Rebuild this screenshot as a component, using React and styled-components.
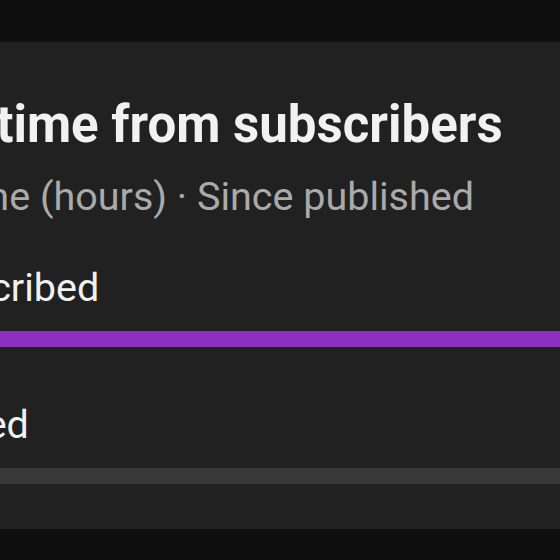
import React from "react";
import styled, { createGlobalStyle } from "styled-components";

const Global = createGlobalStyle`
  html, body {
    margin: 0;
    padding: 0;
    background: #0f0f0f;
    overflow: hidden;
  }
  body {
    font-family: Roboto, "Noto Sans", "Liberation Sans", sans-serif;
  }
`;

const Page = styled.div`
  width: 560px;
  height: 560px;
  padding-top: 42px;
  box-sizing: border-box;
  overflow: hidden;
`;

const Card = styled.section`
  background: #212121;
  margin-left: -168px;
  width: 900px;
  padding: 53px 0 45px 0;
  box-sizing: border-box;
`;

const Header = styled.header`
  padding-left: 8px;
`;

const Title = styled.h2`
  margin: 0;
  font-size: 51px;
  line-height: 60px;
  font-weight: 700;
  color: #f1f1f1;
  white-space: nowrap;
`;

const Subtitle = styled.div`
  margin: 20px 0 0 -9px;
  font-size: 39.5px;
  line-height: 44px;
  color: #aaaaaa;
  white-space: nowrap;
`;

const Legend = styled.div`
  margin-top: 47px;
  display: flex;
  flex-direction: column;
  gap: 56px;
`;

const Series = styled.div`
  display: flex;
  flex-direction: column;
  gap: 21px;
`;

const Label = styled.div`
  font-size: 39.5px;
  line-height: 44px;
  color: #f1f1f1;
  white-space: nowrap;
`;

const Track = styled.div`
  height: 16px;
  background: #383838;
`;

const Fill = styled.div`
  height: 100%;
  background: #8e30bf;
`;

const series = [
  { label: "Not subscribed", value: 100 },
  { label: "Subscribed", value: 0 },
];

export default function App() {
  return (
    <>
      <Global />
      <Page>
        <Card>
          <Header>
            <Title>Watch time from subscribers</Title>
            <Subtitle>Watch time (hours) · Since published</Subtitle>
          </Header>
          <Legend>
            {series.map((s) => (
              <Series key={s.label}>
                <Label>{s.label}</Label>
                <Track>
                  <Fill style={{ width: `${s.value}%` }} />
                </Track>
              </Series>
            ))}
          </Legend>
        </Card>
      </Page>
    </>
  );
}
